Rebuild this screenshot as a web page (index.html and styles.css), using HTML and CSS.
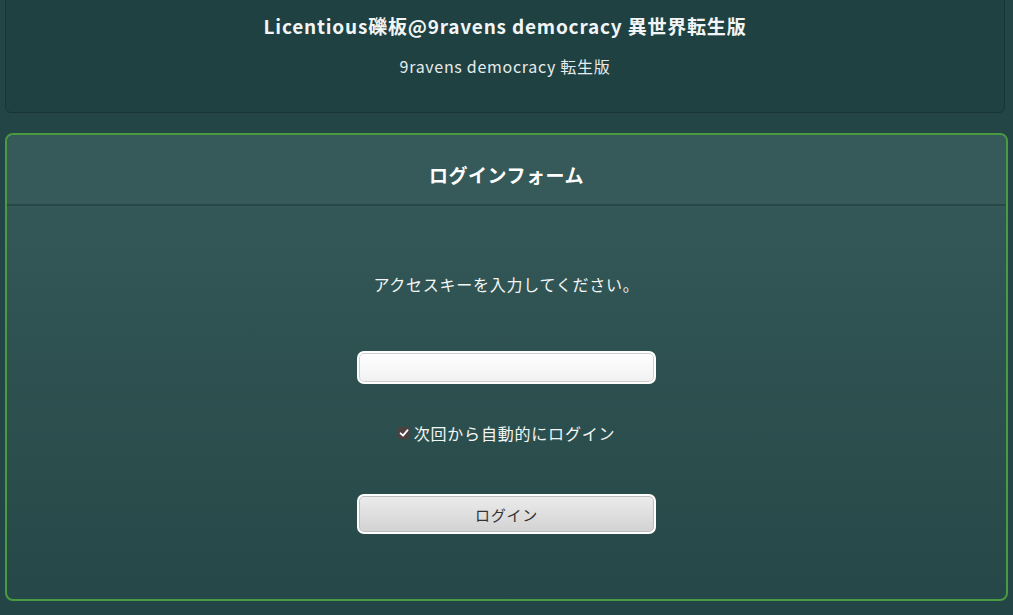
FILE: index.html
```html
<!DOCTYPE html>
<html lang="ja">
<head>
<meta charset="utf-8">
<title>ログイン</title>
<link rel="stylesheet" href="styles.css">
</head>
<body>
<header class="site-header">
  <h1 class="site-title">Licentious礫板@9ravens democracy 異世界転生版</h1>
  <p class="site-sub">9ravens democracy 転生版</p>
</header>
<section class="panel">
  <div class="panel-head">ログインフォーム</div>
  <div class="panel-body">
    <p class="lead">アクセスキーを入力してください。</p>
    <input class="key-input" type="password" aria-label="アクセスキー">
    <label class="auto">
      <span class="check"><svg width="12" height="12" viewBox="0 0 12 12"><path d="M2.6 6.3 L5 8.6 L9.6 3.2" fill="none" stroke="#fff" stroke-width="1.8" stroke-linecap="round" stroke-linejoin="round"/></svg></span>
      <span>次回から自動的にログイン</span>
    </label>
    <button class="login-btn" type="button">ログイン</button>
  </div>
</section>
</body>
</html>
```
FILE: styles.css
```css
html, body {
  margin: 0;
  padding: 0;
}
body {
  background: #234546;
  font-family: "Noto Sans CJK JP", "Noto Sans", sans-serif;
  color: #ffffff;
  padding: 0 5px;
  overflow: hidden;
  height: 615px;
}
.site-header {
  margin: -6px 3px 0 0;
  background: #1f4142;
  border: 1px solid #183435;
  border-radius: 6px;
  padding: 17px 0 35px;
  text-align: center;
}
.site-title {
  margin: 0;
  font-size: 19px;
  line-height: 28px;
  font-weight: 700;
  letter-spacing: 0.8px;
  color: #f2f5f5;
}
.site-sub {
  margin: 15px 0 0;
  font-size: 16px;
  line-height: 22px;
  letter-spacing: 0.7px;
  color: #e6ecec;
}
.panel {
  margin: 20px 0 0 0;
  border: 2px solid #4a9a42;
  border-radius: 8px;
  overflow: hidden;
  background: linear-gradient(to bottom, #375b5a 0%, #2f5352 40%, #264848 100%);
}
.panel-head {
  background: #365a59;
  text-align: center;
  font-size: 19px;
  font-weight: 700;
  line-height: 26px;
  letter-spacing: 0.5px;
  padding: 27px 0 16px;
  border-bottom: 2px solid #264847;
}
.panel-body {
  display: flex;
  flex-direction: column;
  align-items: center;
  padding: 66px 0 65px;
}
.lead {
  margin: 0;
  font-size: 16px;
  line-height: 24px;
  letter-spacing: 0.75px;
  color: #f4f6f6;
}
.key-input {
  box-sizing: border-box;
  margin-top: 55px;
  width: 299px;
  height: 33px;
  border: 2px solid #ffffff;
  border-radius: 7px;
  background: linear-gradient(to bottom, #ffffff, #f1f1f1);
  box-shadow: inset 0 0 0 1px #cfcfcf;
  outline: none;
}
.auto {
  margin-top: 37px;
  display: flex;
  align-items: center;
  gap: 4px;
  font-size: 16px;
  line-height: 24px;
  letter-spacing: 0.8px;
  color: #f4f6f6;
}
.check {
  width: 12px;
  height: 12px;
  background: #4d4140;
  border-radius: 2px;
  display: flex;
}
.login-btn {
  box-sizing: border-box;
  margin-top: 49px;
  width: 299px;
  height: 40px;
  border: 2px solid #ffffff;
  border-radius: 7px;
  background: linear-gradient(to bottom, #ececec, #d2d2d2);
  box-shadow: inset 0 0 0 1px #bdbdbd;
  font-family: "Noto Sans CJK JP", "Noto Sans", sans-serif;
  font-size: 15px;
  letter-spacing: 0.8px;
  color: #333333;
  padding: 0;
}
```
